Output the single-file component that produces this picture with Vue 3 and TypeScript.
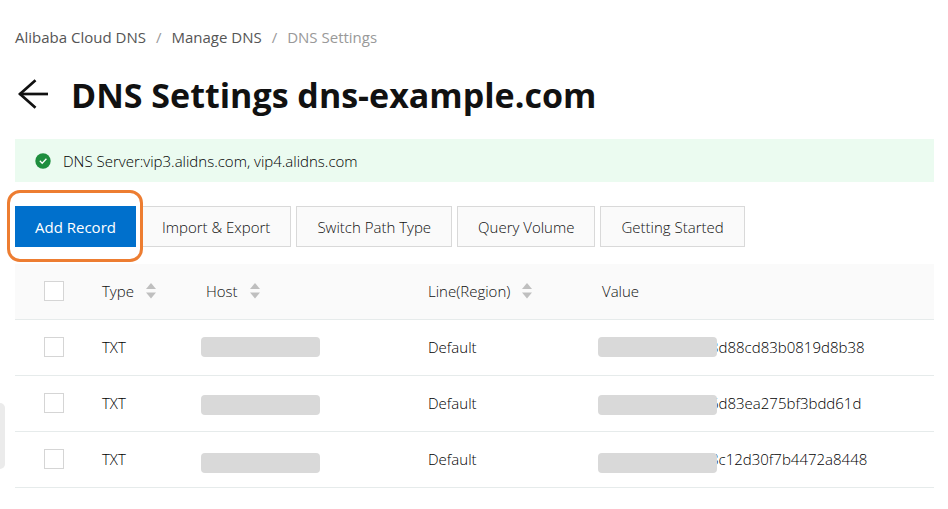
<script setup lang="ts">
import { computed, ref } from 'vue'

interface DnsRecord {
  id: number
  type: string
  line: string
  value: string
}

const records: DnsRecord[] = [
  { id: 1, type: 'TXT', line: 'Default', value: '3d88cd83b0819d8b38' },
  { id: 2, type: 'TXT', line: 'Default', value: '6d83ea275bf3bdd61d' },
  { id: 3, type: 'TXT', line: 'Default', value: '8c12d30f7b4472a8448' },
]

const actions: string[] = ['Import & Export', 'Switch Path Type', 'Query Volume', 'Getting Started']

const selected = ref<number[]>([])
const allSelected = computed<boolean>({
  get: () => selected.value.length === records.length,
  set: (on) => {
    selected.value = on ? records.map((r) => r.id) : []
  },
})
</script>

<template>
  <div class="page">
    <button class="drawer" type="button" aria-label="Open menu"></button>

    <nav class="breadcrumb" aria-label="Breadcrumb">
      <a href="#">Alibaba Cloud DNS</a>
      <span class="slash">/</span>
      <a href="#">Manage DNS</a>
      <span class="slash">/</span>
      <span class="current">DNS Settings</span>
    </nav>

    <header class="heading">
      <a class="back" href="#" aria-label="Back">
        <svg width="32" height="32" viewBox="0 0 32 32" fill="none" stroke="#111" stroke-width="2.700">
          <path d="M31 15H2.500" />
          <path d="M18.500 1.200L3 15L18.500 28.800" />
        </svg>
      </a>
      <h1>DNS Settings dns-example.com</h1>
    </header>

    <div class="notice" role="status">
      <svg width="16" height="16" viewBox="0 0 16 16">
        <circle cx="8" cy="8" r="7.700" fill="#1e8e3e" />
        <path d="M4.800 7.800L7.200 10.200L11.400 5.800" fill="none" stroke="#fff" stroke-width="1.300" />
      </svg>
      <span>DNS Server:vip3.alidns.com, vip4.alidns.com</span>
    </div>

    <div class="toolbar">
      <div class="spotlight">
        <button class="btn primary" type="button">Add Record</button>
      </div>
      <button v-for="action in actions" :key="action" class="btn" type="button">{{ action }}</button>
    </div>

    <div class="records">
      <table>
        <colgroup>
          <col class="c-check" />
          <col class="c-type" />
          <col class="c-host" />
          <col class="c-line" />
          <col />
        </colgroup>
        <thead>
          <tr>
            <th><input v-model="allSelected" type="checkbox" aria-label="Select all records" /></th>
            <th v-for="label in ['Type', 'Host', 'Line(Region)']" :key="label" scope="col">
              <button class="sort" type="button">
                {{ label }}
                <svg width="10" height="16" viewBox="0 0 10 16" fill="#bfbfbf">
                  <path d="M5 0L10 6H0Z" />
                  <path d="M0 9.500H10L5 15.500Z" />
                </svg>
              </button>
            </th>
            <th scope="col">Value</th>
          </tr>
        </thead>
        <tbody>
          <tr v-for="record in records" :key="record.id">
            <td>
              <input v-model="selected" type="checkbox" :value="record.id" :aria-label="`Select record ${record.id}`" />
            </td>
            <td>{{ record.type }}</td>
            <td></td>
            <td>{{ record.line }}</td>
            <td class="value">{{ record.value }}</td>
          </tr>
        </tbody>
      </table>
      <div class="masks masks-host" aria-hidden="true">
        <span v-for="record in records" :key="record.id"></span>
      </div>
      <div class="masks masks-value" aria-hidden="true">
        <span v-for="record in records" :key="record.id"></span>
      </div>
    </div>
  </div>
</template>

<style>
body {
  background: #fff;
}
</style>

<style scoped>
.page {
  position: relative;
  box-sizing: border-box;
  padding: 26px 14px 20px 15px;
  font-family: 'Open Sans', 'Noto Sans', sans-serif;
  font-size: 15px;
  font-weight: 300;
  line-height: 22px;
  color: #000;
}

.page *,
.page *::before {
  box-sizing: border-box;
}

.drawer {
  position: absolute;
  left: 0;
  top: 403px;
  width: 5px;
  height: 66px;
  padding: 0;
  border: 0;
  border-radius: 0 5px 5px 0;
  background: #ebebeb;
}

.breadcrumb {
  display: flex;
  gap: 10px;
  font-weight: 400;
}

.breadcrumb a {
  color: #555;
  text-decoration: none;
}

.slash,
.current {
  color: #999;
}

.heading {
  display: flex;
  align-items: center;
  gap: 22px;
  margin-top: 22px;
  padding-left: 2px;
}

.back {
  display: flex;
}

h1 {
  margin: 0;
  font-size: 34px;
  line-height: 50px;
  font-weight: 700;
  color: #111;
}

.notice {
  display: flex;
  align-items: center;
  gap: 12px;
  height: 43px;
  margin-top: 19px;
  padding: 0 20px;
  background: #ebfbf0;
}

.toolbar {
  display: flex;
  gap: 5px;
  margin-top: 24px;
}

.spotlight {
  position: relative;
}

.spotlight::before {
  content: '';
  position: absolute;
  inset: -16px -7px -15px -8px;
  border: 3px solid #ed7d31;
  border-radius: 13px;
  background: #fff;
}

.btn {
  height: 41px;
  padding: 0 20px;
  border: 1px solid #d9d9d9;
  background: #fafafa;
  color: #111;
  font: inherit;
}

.btn.primary {
  position: relative;
  padding: 0 19px;
  border-color: #0070cc;
  background: #0070cc;
  color: #fff;
  font-weight: 400;
}

.records {
  position: relative;
  margin-top: 17px;
}

table {
  width: 100%;
  table-layout: fixed;
  border-collapse: separate;
  border-spacing: 0;
}

.c-check {
  width: 71px;
}

.c-type {
  width: 104px;
}

.c-host {
  width: 222px;
}

.c-line {
  width: 174px;
}

th,
td {
  height: 56px;
  padding: 0 0 2px 16px;
  border-bottom: 1px solid #e6ebeb;
  text-align: left;
  font-weight: 300;
  white-space: nowrap;
}

th {
  background: #fafafa;
  color: #111;
}

th:first-child,
td:first-child {
  padding-left: 29px;
}

.value {
  padding-left: 124px;
}

input {
  display: block;
  appearance: none;
  width: 20px;
  height: 20px;
  margin: 0;
  border: 1px solid #d5d5d5;
  background: #fff;
}

input:checked {
  background: #0070cc;
}

.sort {
  display: flex;
  align-items: center;
  gap: 12px;
  padding: 0;
  border: 0;
  background: none;
  color: inherit;
  font: inherit;
}

.masks {
  position: absolute;
  top: 73px;
  display: grid;
  gap: 38px;
}

.masks span {
  width: 119px;
  height: 20px;
  border-radius: 4px;
  background: #d9d9d9;
}

.masks-host {
  left: 186px;
}

.masks-value {
  left: 583px;
}
</style>
